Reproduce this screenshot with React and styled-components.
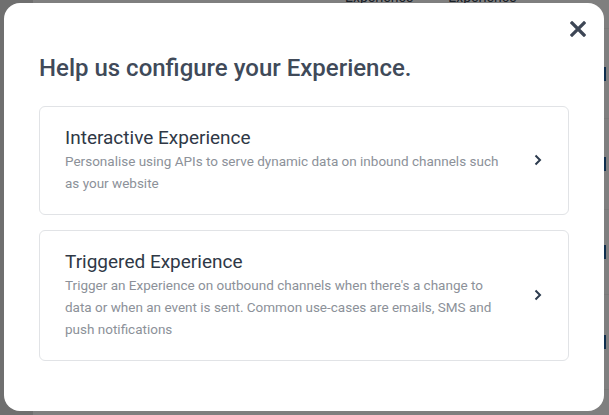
import React from 'react';
import styled, { createGlobalStyle } from 'styled-components';

//----------------------------------------------> GLOBAL
const GlobalStyle = createGlobalStyle`
    html, body, #root { height: 100%; }
    body {
        margin: 0;
        font-family: Roboto, "Liberation Sans", Arial, sans-serif;
        overflow: hidden;
    }
    * { box-sizing: border-box; }
`;

const experiences = [
    {
        title: "Interactive Experience",
        text: "Personalise using APIs to serve dynamic data on inbound channels such as your website"
    },
    {
        title: "Triggered Experience",
        text: "Trigger an Experience on outbound channels when there's a change to data or when an event is sent. Common use-cases are emails, SMS and push notifications"
    }
];

const rows = [90, 91, 85, 95];

//----------------------------------------------> ICONS
const CloseIcon = () => (
    <svg width="16" height="16" viewBox="0 0 16 16">
        <path d="M2 2 L14 14 M14 2 L2 14" stroke="#3d4655" strokeWidth="3.2" strokeLinecap="square" fill="none" />
    </svg>
);

const Chevron = () => (
    <svg width="10" height="12" viewBox="0 0 10 12">
        <path d="M2.5 1.5 L7 6 L2.5 10.5" stroke="#2c3b4e" strokeWidth="2" fill="none" />
    </svg>
);

//----------------------------------------------> APP
export default function App() {
    return (
        <>
            <GlobalStyle />
            <Page>
                <Sidebar />
                <Main>
                    <TableHead>
                        <span>Experience</span>
                        <span>Experience</span>
                    </TableHead>
                    {rows.map((h, k) => (
                        <TableRow key={k} $h={h}>
                            <Marker />
                        </TableRow>
                    ))}
                </Main>
            </Page>
            <Backdrop>
                <Modal>
                    <TopBar>
                        <CloseButton aria-label="Close"><CloseIcon /></CloseButton>
                    </TopBar>
                    <Heading>Help us configure your Experience.</Heading>
                    <CardList>
                        {experiences.map((e, k) => (
                            <Card key={k}>
                                <CardBody>
                                    <CardTitle>{e.title}</CardTitle>
                                    <CardText>{e.text}</CardText>
                                </CardBody>
                                <Arrow><Chevron /></Arrow>
                            </Card>
                        ))}
                    </CardList>
                </Modal>
            </Backdrop>
        </>
    );
}

//----------------------------------------------> BACKGROUND PAGE
const Page = styled.div`
    display: flex;
    height: 100vh;
    background: #ffffff;
`;

const Sidebar = styled.aside`
    width: 33px;
    background: #dedede;
`;

const Main = styled.main`
    flex: 1;
    display: flex;
    flex-direction: column;
`;

const TableHead = styled.div`
    display: flex;
    gap: 35px;
    height: 40px;
    margin-top: -11px;
    padding-left: 312px;
    font-size: 14px;
    line-height: 16px;
    color: #33404f;
    border-bottom: 1px solid #f2f2f2;
`;

const TableRow = styled.div`
    height: ${p => p.$h}px;
    display: flex;
    align-items: center;
    padding-left: 570px;
    border-bottom: 1px solid #f2f2f2;
`;

const Marker = styled.div`
    width: 3px;
    height: 14px;
    background: #1f5d9a;
`;

const Backdrop = styled.div`
    position: fixed;
    inset: 0;
    background: rgba(0, 0, 0, 0.5);
`;

//----------------------------------------------> MODAL
const Modal = styled.section`
    position: absolute;
    left: 4px;
    top: 3px;
    width: 600px;
    height: 408px;
    background: #fff;
    border-radius: 16px;
    padding: 0 35px;
`;

const TopBar = styled.div`
    display: flex;
    justify-content: flex-end;
    padding-top: 15px;
    margin-right: -20px;
`;

const CloseButton = styled.button`
    width: 22px;
    height: 22px;
    padding: 0;
    border: none;
    background: transparent;
    display: flex;
    align-items: center;
    justify-content: center;
    cursor: pointer;
`;

const Heading = styled.h2`
    margin: 14px 0 0;
    font-size: 24px;
    line-height: 28px;
    font-weight: 500;
    color: #404a59;
`;

const CardList = styled.div`
    margin-top: 24px;
    display: flex;
    flex-direction: column;
    gap: 15px;
`;

const Card = styled.div`
    display: flex;
    align-items: center;
    padding: 19px 25px 20px 25px;
    border: 1px solid #e1e3e6;
    border-radius: 6px;
    cursor: pointer;
`;

const CardBody = styled.div`
    flex: 1;
    max-width: 438px;
`;

const CardTitle = styled.div`
    font-size: 19px;
    line-height: 24px;
    color: #2f3846;
`;

const CardText = styled.div`
    font-size: 13.5px;
    line-height: 22px;
    color: #8c9199;
`;

const Arrow = styled.div`
    margin-left: auto;
    width: 10px;
    display: flex;
    align-items: center;
`;
